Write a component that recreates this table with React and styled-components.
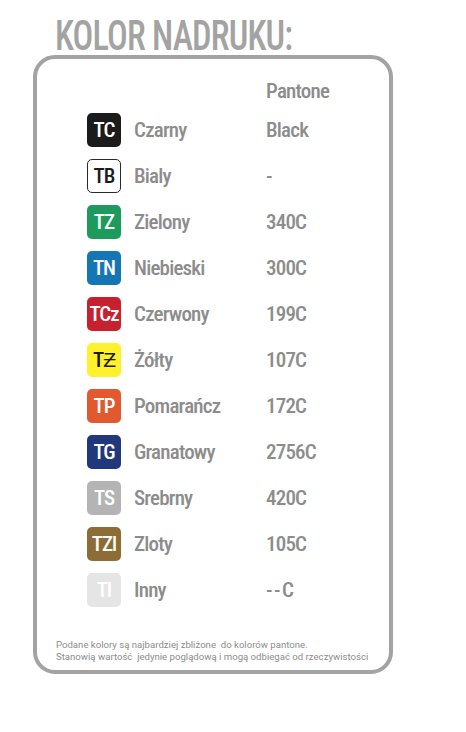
import React from 'react'
import styled, {createGlobalStyle} from 'styled-components'

const GlobalStyle = createGlobalStyle`
    body { margin: 0; background: #fff; }
`

const Page = styled.div`
    width: 466px;
    height: 732px;
    font-family: "Roboto Condensed", Roboto, sans-serif;
    color: #8c8c8c;
`

const Title = styled.h1`
    margin: 0;
    padding: 17px 0 0 55px;
    height: 38px;
    font-size: 42px;
    line-height: 38px;
    font-weight: 500;
    color: #a3a3a3;
    span {
        display: inline-block;
        letter-spacing: -1px;
        transform: scaleX(0.82);
        transform-origin: left center;
        white-space: nowrap;
    }
`

const Card = styled.div`
    box-sizing: border-box;
    margin-left: 33px;
    width: 360px;
    height: 619px;
    border: 4px solid #a3a3a3;
    border-radius: 22px;
    display: flex;
    flex-direction: column;
`

const Table = styled.div`
    display: grid;
    grid-template-columns: 34px 119px auto;
    column-gap: 13px;
    row-gap: 12px;
    align-items: center;
    padding: 20px 0 0 50px;
`

const Header = styled.div`
    grid-column: 3;
    font-size: 21px;
    font-weight: 500;
    line-height: 24px;
    letter-spacing: -0.8px;
    margin-bottom: -2px;
`

const Badge = styled.div`
    box-sizing: border-box;
    width: 34px;
    height: 34px;
    border-radius: 5px;
    background: ${p => p.bg};
    color: ${p => p.fg || '#fff'};
    border: ${p => p.outline ? '1px solid #2a2a2a' : 'none'};
    display: flex;
    align-items: center;
    justify-content: center;
    font-size: 21px;
    font-weight: 500;
    letter-spacing: -1px;
`

const Cell = styled.div`
    font-size: 21px;
    font-weight: 500;
    line-height: 34px;
    letter-spacing: ${p => p.wide ? '1.5px' : '-0.8px'};
    white-space: nowrap;
`

const Note = styled.div`
    margin-top: auto;
    padding: 0 0 7px 19px;
    font-family: Roboto, sans-serif;
    font-size: 9.6px;
    line-height: 12px;
    color: #8c8c8c;
    white-space: pre;
`

const colors = [
    {code: 'TC', bg: '#1b1b1b', name: 'Czarny', pantone: 'Black'},
    {code: 'TB', bg: '#fff', fg: '#1b1b1b', outline: true, name: 'Bialy', pantone: '-'},
    {code: 'TZ', bg: '#1c9b5d', name: 'Zielony', pantone: '340C'},
    {code: 'TN', bg: '#1476b3', name: 'Niebieski', pantone: '300C'},
    {code: 'TCz', bg: '#c6212f', name: 'Czerwony', pantone: '199C'},
    {code: 'TƵ', bg: '#fff12b', fg: '#1b1b1b', name: 'Żółty', pantone: '107C'},
    {code: 'TP', bg: '#e2582f', name: 'Pomarańcz', pantone: '172C'},
    {code: 'TG', bg: '#22387c', name: 'Granatowy', pantone: '2756C'},
    {code: 'TS', bg: '#b4b4b4', name: 'Srebrny', pantone: '420C'},
    {code: 'TZl', bg: '#8d6d35', name: 'Zloty', pantone: '105C'},
    {code: 'TI', bg: '#e5e5e5', name: 'Inny', pantone: '--C', wide: true},
]

export default function App() {
    return (
        <Page>
            <GlobalStyle/>
            <Title><span>KOLOR NADRUKU:</span></Title>
            <Card>
                <Table>
                    <Header>Pantone</Header>
                    {colors.map(c => (
                        <React.Fragment key={c.code}>
                            <Badge bg={c.bg} fg={c.fg} outline={c.outline}>{c.code}</Badge>
                            <Cell>{c.name}</Cell>
                            <Cell wide={c.wide}>{c.pantone}</Cell>
                        </React.Fragment>
                    ))}
                </Table>
                <Note>{'Podane kolory są najbardziej zbliżone  do kolorów pantone.\nStanowią wartość  jedynie poglądową i mogą odbiegać od rzeczywistości'}</Note>
            </Card>
        </Page>
    )
}
